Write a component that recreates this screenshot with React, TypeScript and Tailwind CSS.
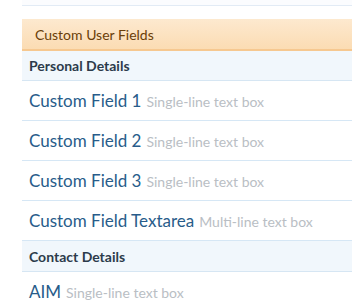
import React from 'react';

type Field = { title: string; type: string };

const personal: Field[] = [
  { title: 'Custom Field 1', type: 'Single-line text box' },
  { title: 'Custom Field 2', type: 'Single-line text box' },
  { title: 'Custom Field 3', type: 'Single-line text box' },
  { title: 'Custom Field Textarea', type: 'Multi-line text box' },
];

const contact: Field[] = [{ title: 'AIM', type: 'Single-line text box' }];

const FieldRow = ({ field }: { field: Field }) => (
  <div className="h-[40px] flex items-center pl-[7px] border-b border-[#d6e7f5] whitespace-nowrap">
    <span className="text-[17px] leading-[22px] text-[#285c8a]">{field.title}</span>
    <span className="ml-[5px] text-[14px] leading-[18px] text-[#b9bec4] mt-[2px]">{field.type}</span>
  </div>
);

const GroupHeader = ({ label, first }: { label: string; first?: boolean }) => (
  <div className={`${first ? 'h-[30px]' : 'h-[31px]'} flex items-center pl-[7px] bg-[#f1f7fc] border-b border-[#d6e6f3]`}>
    <span className="text-[14px] font-bold text-[#2c3b4b]">{label}</span>
  </div>
);

export default function App() {
  return (
    <div className="w-[352px] h-[300px] overflow-hidden bg-white pl-[22px]" style={{ fontFamily: 'Lato, "Open Sans", sans-serif' }}>
      <div className="h-[6px] bg-[#fbfcfe] border-b border-[#e2ebf5]" />
      <div className="h-[13px]" />
      <div className="h-[32px] flex items-center pl-[13px] bg-gradient-to-b from-[#fde9cf] to-[#fbdcb3] border-b-2 border-[#f6c890]">
        <span className="text-[14px] text-[#6a3e08]">Custom User Fields</span>
      </div>
      <GroupHeader label="Personal Details" first />
      {personal.map((f) => (
        <FieldRow key={f.title} field={f} />
      ))}
      <GroupHeader label="Contact Details" />
      {contact.map((f) => (
        <FieldRow key={f.title} field={f} />
      ))}
    </div>
  );
}
